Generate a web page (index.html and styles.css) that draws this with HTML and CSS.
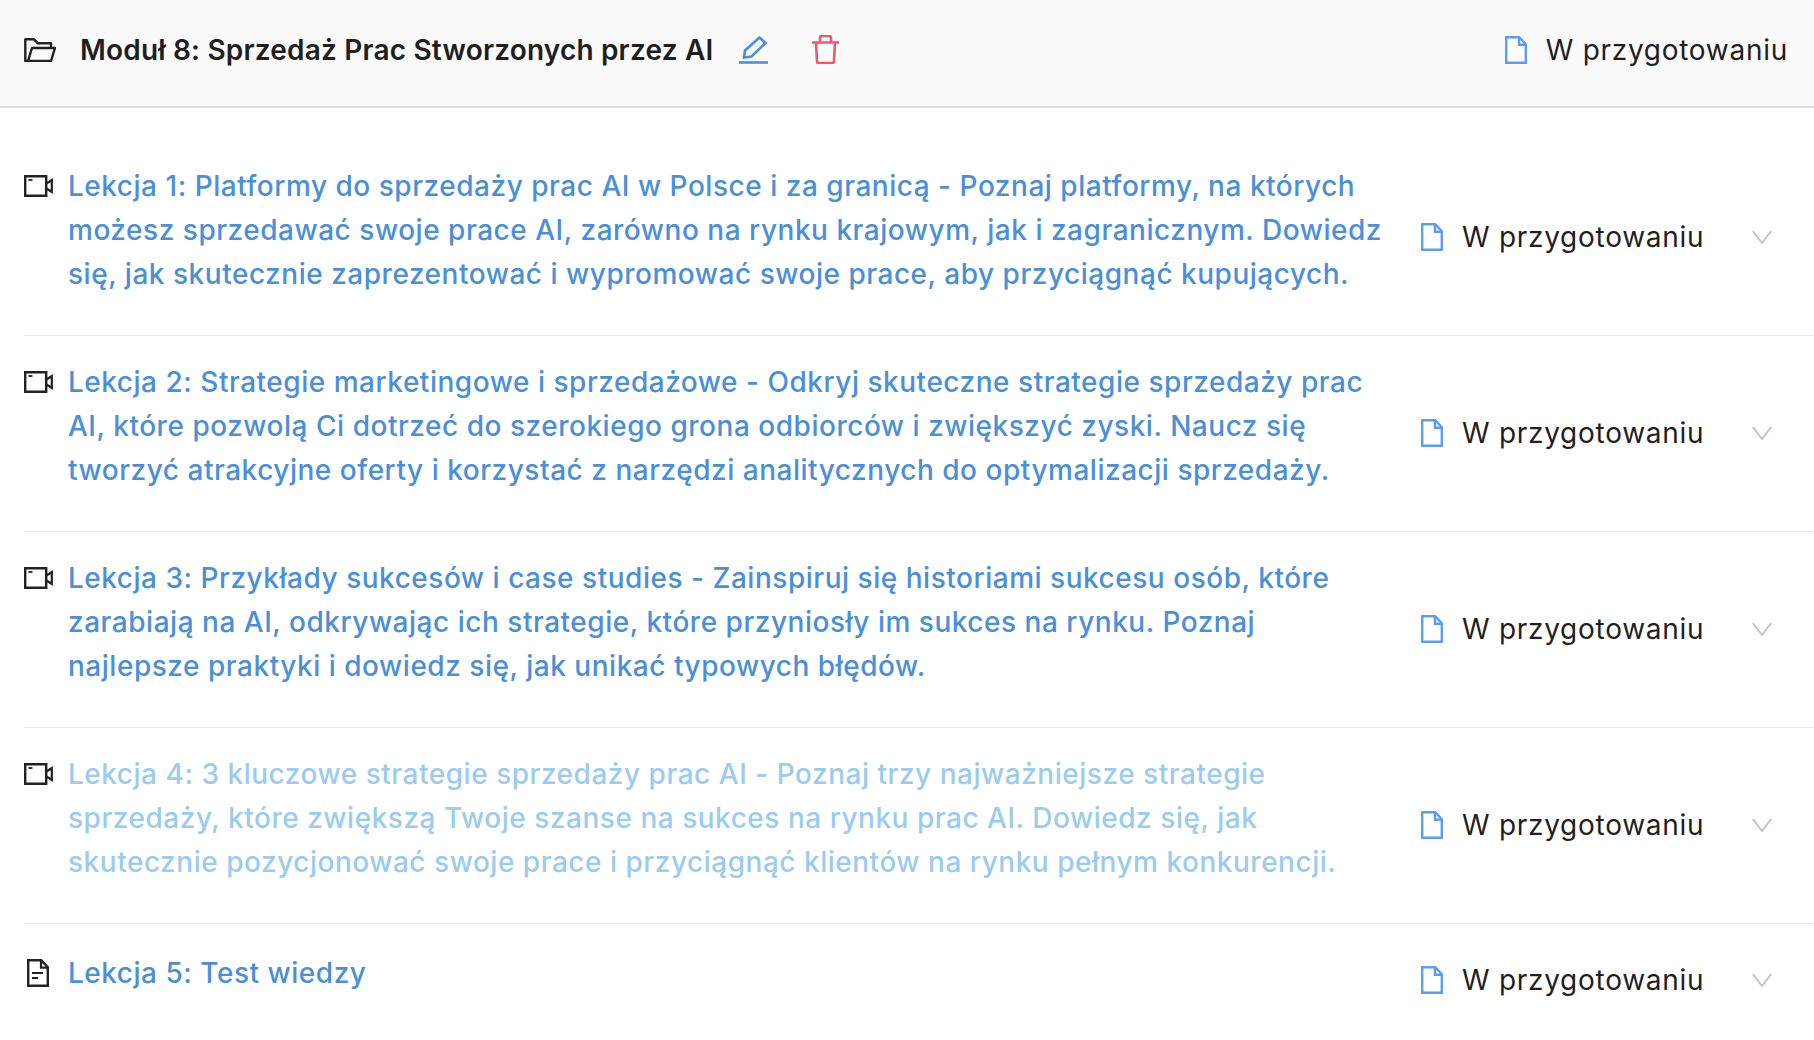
FILE: index.html
```html
<!DOCTYPE html>
<html lang="pl">
<head>
<meta charset="utf-8">
<title>Moduł 8</title>
<link rel="stylesheet" href="styles.css">
</head>
<body>
<svg class="defs" width="0" height="0" aria-hidden="true">
  <symbol id="doc" viewBox="0 0 22 28"><path d="M1.200 1.200h13l6.600 7v18.600H1.200z" fill="#fff" stroke="#5b9df5" stroke-width="2.400"/><path d="M14 1.200v7.500h6.800" fill="none" stroke="#5b9df5" stroke-width="2.400"/></symbol>
  <symbol id="cam" viewBox="0 0 29 22"><path d="M1.200 1.200h21v19.600h-21z" fill="none" stroke="#222" stroke-width="2.400"/><path d="M22.500 8.500l5.300-3.500v12l-5.300-3.500" fill="none" stroke="#222" stroke-width="2.200"/><path d="M4.500 5h4" stroke="#222" stroke-width="1.800"/></symbol>
  <symbol id="chev" viewBox="0 0 20 14"><path d="M.8 1l9.200 12L19.200 1" fill="none" stroke="#c4c4c4" stroke-width="2"/></symbol>
  <symbol id="quiz" viewBox="0 0 22 28"><path d="M1.200 1.200h13l6.600 7v18.600H1.200z" fill="none" stroke="#222" stroke-width="2.400"/><path d="M14 1.200v7.500h6.800" fill="none" stroke="#222" stroke-width="2.200"/><path d="M5 14h11M5 19h6" stroke="#222" stroke-width="1.800"/></symbol>
</svg>
<header class="head">
  <svg class="i-folder" viewBox="0 0 32 24"><path d="M4 23H1.300V1.300H10l4 4h13V10M4 23l4-13h23l-4 13z" fill="none" stroke="#222" stroke-width="2.400" stroke-linejoin="round"/></svg>
  <h1 class="title">Moduł 8: Sprzedaż Prac Stworzonych przez AI</h1>
  <svg class="i-edit" viewBox="0 0 29 28"><path d="M5 21.500l1-7L20.500 1.500l6 5.500-14 13.500z" fill="none" stroke="#4a90d9" stroke-width="2.600"/><path d="M0 26.500h29" stroke="#4a90d9" stroke-width="2.600"/></svg>
  <svg class="i-trash" viewBox="0 0 27 29"><path d="M0 7.500h27M4 7.500l1 18.500a2 2 0 0 0 2 2h13a2 2 0 0 0 2-2l1-18.500M8 7.500V3a2 2 0 0 1 2-2h7a2 2 0 0 1 2 2v4.500" fill="none" stroke="#ea5b68" stroke-width="2.600" stroke-linejoin="round"/></svg>
  <div class="status status-head"><svg class="i-doc"><use href="#doc"/></svg><span>W przygotowaniu</span></div>
</header>
<main class="list">
  <article class="row">
    <svg class="i-cam"><use href="#cam"/></svg>
    <p class="lesson">Lekcja 1: Platformy do sprzedaży prac AI w Polsce i za granicą - Poznaj platformy, na których<br>możesz sprzedawać swoje prace AI, zarówno na rynku krajowym, jak i zagranicznym. Dowiedz<br>się, jak skutecznie zaprezentować i wypromować swoje prace, aby przyciągnąć kupujących.</p>
    <div class="status"><svg class="i-doc"><use href="#doc"/></svg><span>W przygotowaniu</span></div>
    <svg class="i-chev"><use href="#chev"/></svg>
  </article>
  <article class="row">
    <svg class="i-cam"><use href="#cam"/></svg>
    <p class="lesson">Lekcja 2: Strategie marketingowe i sprzedażowe - Odkryj skuteczne strategie sprzedaży prac<br>AI, które pozwolą Ci dotrzeć do szerokiego grona odbiorców i zwiększyć zyski. Naucz się<br>tworzyć atrakcyjne oferty i korzystać z narzędzi analitycznych do optymalizacji sprzedaży.</p>
    <div class="status"><svg class="i-doc"><use href="#doc"/></svg><span>W przygotowaniu</span></div>
    <svg class="i-chev"><use href="#chev"/></svg>
  </article>
  <article class="row">
    <svg class="i-cam"><use href="#cam"/></svg>
    <p class="lesson">Lekcja 3: Przykłady sukcesów i case studies - Zainspiruj się historiami sukcesu osób, które<br>zarabiają na AI, odkrywając ich strategie, które przyniosły im sukces na rynku. Poznaj<br>najlepsze praktyki i dowiedz się, jak unikać typowych błędów.</p>
    <div class="status"><svg class="i-doc"><use href="#doc"/></svg><span>W przygotowaniu</span></div>
    <svg class="i-chev"><use href="#chev"/></svg>
  </article>
  <article class="row">
    <svg class="i-cam"><use href="#cam"/></svg>
    <p class="lesson lesson-faded">Lekcja 4: 3 kluczowe strategie sprzedaży prac AI - Poznaj trzy najważniejsze strategie<br>sprzedaży, które zwiększą Twoje szanse na sukces na rynku prac AI. Dowiedz się, jak<br>skutecznie pozycjonować swoje prace i przyciągnąć klientów na rynku pełnym konkurencji.</p>
    <div class="status"><svg class="i-doc"><use href="#doc"/></svg><span>W przygotowaniu</span></div>
    <svg class="i-chev"><use href="#chev"/></svg>
  </article>
  <article class="row row-last">
    <svg class="i-quiz"><use href="#quiz"/></svg>
    <p class="lesson lesson-single">Lekcja 5: Test wiedzy</p>
    <div class="status"><svg class="i-doc"><use href="#doc"/></svg><span>W przygotowaniu</span></div>
    <svg class="i-chev"><use href="#chev"/></svg>
  </article>
</main>
</body>
</html>
```
FILE: styles.css
```css
* { box-sizing: border-box; }
html, body { margin: 0; background: #fff; }
body { font-family: Inter, "Noto Sans", sans-serif; color: #1f1f1f; height: 1040px; overflow: hidden; }
.defs { display: block; height: 0; }
.head { height: 108px; background: #fafafa; border-bottom: 2px solid #dcdcdc; display: flex; align-items: center; padding: 0 26px 7px 24px; }
.i-folder { width: 32px; height: 24px; margin-right: 24px; flex: none; }
.title { margin: 0; font-size: 28px; font-weight: 600; letter-spacing: 0.18px; color: #1f1f1f; white-space: nowrap; }
.i-edit { width: 29px; height: 28px; margin-left: 26px; flex: none; }
.i-trash { width: 27px; height: 29px; margin-left: 44px; flex: none; }
.status { display: flex; align-items: center; gap: 19px; font-size: 28px; font-weight: 400; letter-spacing: 0.72px; width: 331px; flex: none; }
.status-head { margin-left: auto; width: auto; }
.i-doc { width: 22px; height: 28px; flex: none; }
.list { padding-top: 32px; }
.row { display: flex; align-items: center; margin-left: 24px; height: 196px; padding: 0 42px 2px 0; border-bottom: 1px solid #e8e8e8; }
.row-last { border-bottom: 0; height: 114px; }
.i-cam { width: 29px; height: 22px; flex: none; align-self: flex-start; margin-top: 35px; margin-right: 15px; }
.i-quiz { width: 22px; height: 28px; flex: none; align-self: flex-start; margin: 35px 19px 0 3px; }
.lesson { margin: 0; flex: 1; font-size: 28px; font-weight: 500; line-height: 44px; color: #4a8fd8; white-space: nowrap; letter-spacing: 0.52px; align-self: flex-start; padding-top: 24px; }
.lesson-single { padding-top: 27px; }
.lesson-faded { color: #9bcbee; }
.i-chev { width: 20px; height: 14px; flex: none; }
```
